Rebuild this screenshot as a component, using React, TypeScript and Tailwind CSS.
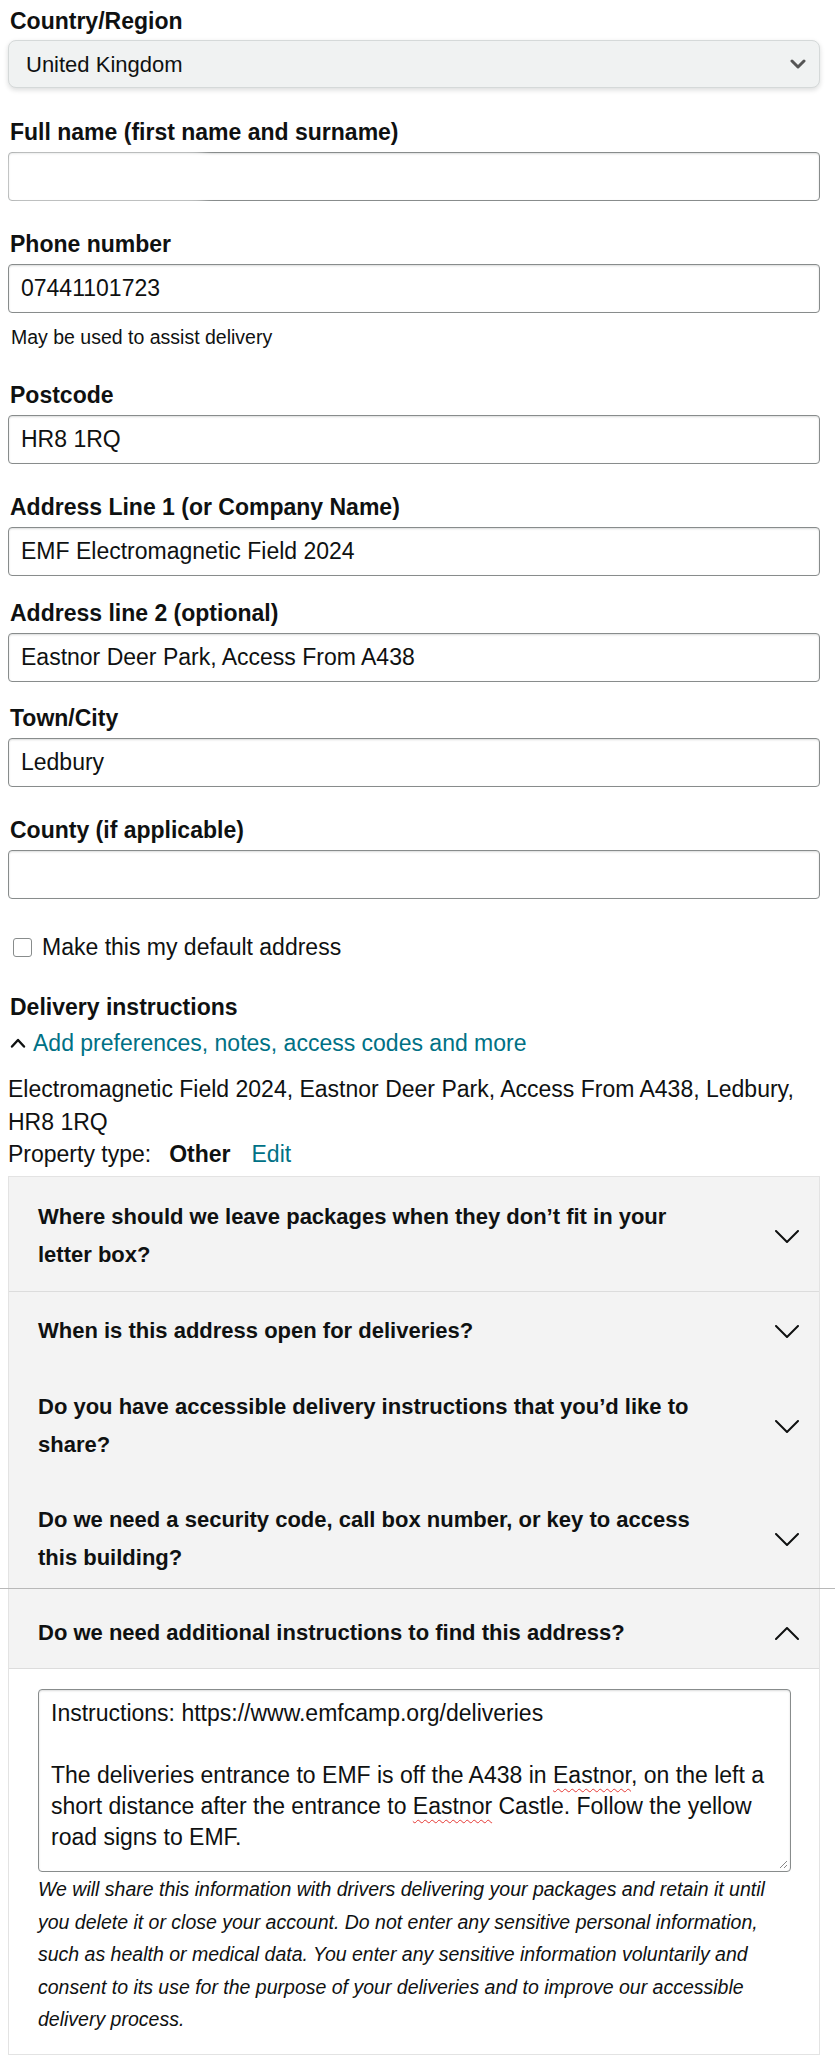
import React from "react";

function Label({ children, className = "" }: { children: React.ReactNode; className?: string }) {
  return <div className={"h-[28px] pl-[2px] text-[23px] font-bold leading-[28px] " + className}>{children}</div>;
}

function Input({ value }: { value?: string }) {
  return (
    <div className="mt-[6px] flex h-[49px] items-center rounded-[4px] border border-[#888c8c] bg-white px-[12px] text-[23px] shadow-[inset_0_1px_2px_rgba(15,17,17,0.15)]">
      {value}
    </div>
  );
}

function ChevronDown() {
  return (
    <svg width="24" height="13" viewBox="0 0 24 13" fill="none" className="shrink-0">
      <path d="M1 1L12 12L23 1" stroke="#0f1111" strokeWidth="2" strokeLinecap="round" strokeLinejoin="round" />
    </svg>
  );
}

function ChevronUp() {
  return (
    <svg width="24" height="13" viewBox="0 0 24 13" fill="none" className="shrink-0">
      <path d="M1 12L12 1L23 12" stroke="#0f1111" strokeWidth="2" strokeLinecap="round" strokeLinejoin="round" />
    </svg>
  );
}

function AccItem({ text, className, up = false }: { text: string; className: string; up?: boolean }) {
  return (
    <div className={"flex items-center justify-between pl-[29px] pr-[20px] " + className}>
      <div className="w-[680px] text-[22px] font-bold leading-[38px]">{text}</div>
      {up ? <ChevronUp /> : <ChevronDown />}
    </div>
  );
}

export default function App() {
  return (
    <div className="w-[835px] bg-white pb-[14px] pl-[8px] pr-[15px] pt-[7px] font-['Liberation_Sans',Arial,sans-serif] text-[#0f1111]">
      <Label>Country/Region</Label>
      <div className="mt-[5px] flex h-[48px] items-center justify-between rounded-[8px] border border-[#d5d9d9] bg-[#f0f2f2] pl-[17px] pr-[13px] text-[22px] shadow-[0_2px_5px_rgba(15,17,17,0.15)]">
        <span>United Kingdom</span>
        <svg width="16" height="10" viewBox="0 0 16 10" fill="none">
          <path d="M2 2L8 8L14 2" stroke="#555" strokeWidth="3" strokeLinecap="round" strokeLinejoin="round" />
        </svg>
      </div>

      <Label className="mt-[30px]">Full name (first name and surname)</Label>
      <div className="relative">
        <Input />
        <div className="pointer-events-none absolute left-[-8px] top-[-4px] h-[58px] w-[210px] rounded-[20px] bg-white/50 blur-[4px]" />
      </div>

      <Label className="mt-[29px]">Phone number</Label>
      <Input value="07441101723" />
      <div className="mt-[12px] h-[24px] pl-[3px] text-[19.5px] leading-[24px]">May be used to assist delivery</div>

      <Label className="mt-[32px]">Postcode</Label>
      <Input value="HR8 1RQ" />

      <Label className="mt-[29px]">Address Line 1 (or Company Name)</Label>
      <Input value="EMF Electromagnetic Field 2024" />

      <Label className="mt-[23px]">Address line 2 (optional)</Label>
      <Input value="Eastnor Deer Park, Access From A438" />

      <Label className="mt-[22px]">Town/City</Label>
      <Input value="Ledbury" />

      <Label className="mt-[29px]">County (if applicable)</Label>
      <Input />

      <div className="mt-[36px] flex h-[24px] items-center">
        <div className="ml-[5px] h-[19px] w-[19px] rounded-[3px] border border-[#888c8c] bg-white" />
        <span className="ml-[10px] text-[23px] leading-[24px]">Make this my default address</span>
      </div>

      <Label className="mt-[34px]">Delivery instructions</Label>
      <div className="mt-[8px] flex h-[28px] items-center">
        <svg width="16" height="10" viewBox="0 0 16 10" fill="none" className="ml-[2px]">
          <path d="M2 8.5L8 2L14 8.5" stroke="#0f1111" strokeWidth="2.4" strokeLinecap="round" strokeLinejoin="round" />
        </svg>
        <span className="ml-[7px] text-[23px] leading-[28px] text-[#007185]">Add preferences, notes, access codes and more</span>
      </div>

      <div className="mt-[16px] text-[23px] leading-[33px]">
        Electromagnetic Field 2024, Eastnor Deer Park, Access From A438, Ledbury, HR8 1RQ
      </div>
      <div className="flex text-[23px] leading-[30px]">
        <span>Property type:</span>
        <span className="ml-[18px] font-bold">Other</span>
        <span className="ml-[21px] text-[#007185]">Edit</span>
      </div>

      <div className="mt-[7px] border border-[#e3e3e3] bg-[#f3f3f3]">
        <AccItem
          className="border-b border-[#dcdcdc] pb-[17px] pt-[21px]"
          text="Where should we leave packages when they don’t fit in your letter box?"
        />
        <AccItem className="pb-[18px] pt-[20px]" text="When is this address open for deliveries?" />
        <AccItem
          className="pb-[18px] pt-[20px]"
          text="Do you have accessible delivery instructions that you’d like to share?"
        />
        <AccItem
          className="pb-[11px] pt-[19px]"
          text="Do we need a security code, call box number, or key to access this building?"
        />
        <div className="ml-[-9px] mr-[-16px] h-px bg-[#b8b8b8]" />
        <AccItem
          className="border-b border-[#dcdcdc] pb-[16px] pt-[25px]"
          up
          text="Do we need additional instructions to find this address?"
        />
        <div className="bg-white pb-[18px] pl-[29px] pr-[28px] pt-[20px]">
          <div className="relative h-[183px] rounded-[4px] border border-[#888c8c] bg-white pl-[12px] pr-[10px] pt-[8px] text-[23px] leading-[31px] shadow-[inset_0_1px_2px_rgba(15,17,17,0.15)]">
            <div>Instructions: https://www.emfcamp.org/deliveries</div>
            <div className="h-[31px]" />
            <div>
              The deliveries entrance to EMF is off the A438 in{" "}
              <span className="underline decoration-[#e53935] decoration-wavy decoration-1 underline-offset-[5px]">Eastnor</span>, on
              the left a short distance after the entrance to{" "}
              <span className="underline decoration-[#e53935] decoration-wavy decoration-1 underline-offset-[5px]">Eastnor</span> Castle.
              Follow the yellow road signs to EMF.
            </div>
            <svg width="10" height="10" viewBox="0 0 10 10" className="absolute bottom-[2px] right-[2px]">
              <path d="M9 2L2 9M9 6L6 9" stroke="#888" strokeWidth="1" />
            </svg>
          </div>
          <div className="mt-[1px] w-[755px] text-[19.5px] italic leading-[32.5px]">
            We will share this information with drivers delivering your packages and retain it until you delete it or close
            your account. Do not enter any sensitive personal information, such as health or medical data. You enter any
            sensitive information voluntarily and consent to its use for the purpose of your deliveries and to improve our
            accessible delivery process.
          </div>
        </div>
      </div>
    </div>
  );
}
